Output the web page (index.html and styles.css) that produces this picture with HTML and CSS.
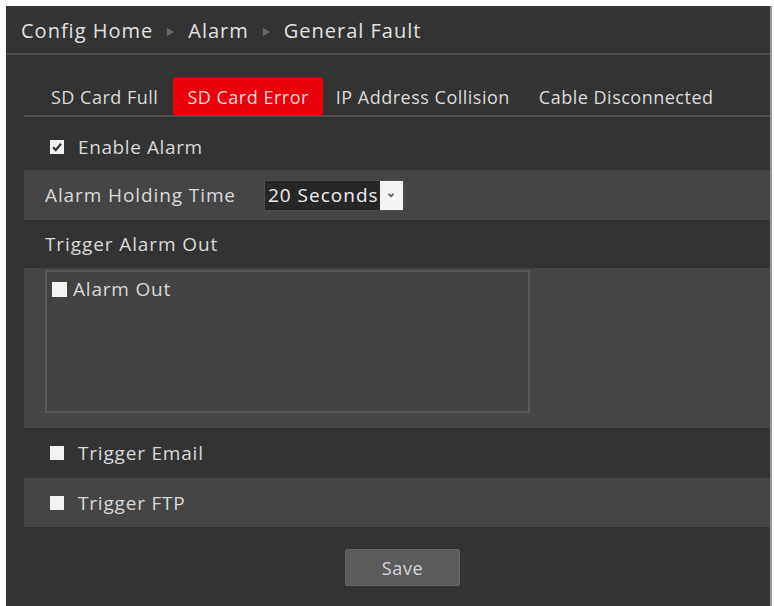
FILE: index.html
```html
<!DOCTYPE html>
<html>
<head>
<meta charset="utf-8">
<link rel="stylesheet" href="styles.css">
</head>
<body>
<div class="panel">
  <div class="crumb">
    <span>Config Home</span><span class="arrow"></span><span>Alarm</span><span class="arrow"></span><span>General Fault</span>
  </div>
  <div class="content">
    <div class="tabs">
      <div class="tab">SD Card Full</div>
      <div class="tab active">SD Card Error</div>
      <div class="tab">IP Address Collision</div>
      <div class="tab">Cable Disconnected</div>
    </div>
    <div class="row enable">
      <span class="cb checked"><svg viewBox="0 0 14 14" width="14" height="14"><path d="M3 7.2 L5.8 10 L11 3.8" fill="none" stroke="#333" stroke-width="2.2"/></svg></span>
      <span>Enable Alarm</span>
    </div>
    <div class="row light holding">
      <span class="label">Alarm Holding Time</span>
      <span class="select"><span class="val">20 Seconds</span><span class="drop"><svg viewBox="0 0 10 10" width="10" height="10"><path d="M2.5 3.8 L5 6.3 L7.5 3.8" fill="none" stroke="#555" stroke-width="1.6"/></svg></span></span>
    </div>
    <div class="row trig">
      <span class="label">Trigger Alarm Out</span>
    </div>
    <div class="boxarea light">
      <div class="box">
        <div class="boxitem"><span class="cb small"></span><span>Alarm Out</span></div>
      </div>
    </div>
    <div class="row email">
      <span class="cb"></span><span>Trigger Email</span>
    </div>
    <div class="row light ftp">
      <span class="cb"></span><span>Trigger FTP</span>
    </div>
    <div class="actions">
      <button class="save">Save</button>
    </div>
  </div>
</div>
</body>
</html>
```

FILE: styles.css
```css
html, body {
  margin: 0;
  padding: 0;
  background: #ffffff;
}
body {
  font-family: "Open Sans", "Liberation Sans", sans-serif;
  color: #d9d9d9;
}
.panel {
  margin: 6px 4px 0 6px;
  height: 600px;
  background: #333333;
  box-shadow: 2px 0 0 #9a9a9a;
}
.crumb {
  height: 45px;
  border-bottom: 2px solid #4c4c4c;
  padding-left: 15px;
  display: flex;
  align-items: center;
  font-size: 20px;
  letter-spacing: 1px;
  color: #e2e2e2;
  padding-top: 2px;
  box-sizing: content-box;
}
.arrow {
  display: inline-block;
  width: 0;
  height: 0;
  border-left: 7px solid #6a6a6a;
  border-top: 4.5px solid transparent;
  border-bottom: 4.5px solid transparent;
  margin: 2px 14px 0 14px;
}
.content {
  padding-left: 18px;
}
.tabs {
  margin-top: 23px;
  height: 37px;
  border-bottom: 2px solid #505050;
  display: flex;
  padding-left: 12px;
  font-size: 18px;
  letter-spacing: 0.5px;
}
.tab {
  padding: 0 15px;
  display: flex;
  align-items: center;
  color: #dcdcdc;
}
.tab.active {
  padding: 0 14px;
  background: #e8000b;
  color: #ffd9d9;
}
.tab:nth-child(3) {
  padding-left: 13px;
}
.tab:nth-child(4) {
  padding-left: 14px;
}
.row {
  display: flex;
  align-items: center;
  font-size: 19px;
  letter-spacing: 0.6px;
}
.light {
  background: #454545;
}
.enable {
  height: 53px;
  padding-left: 26px;
  padding-top: 6px;
  box-sizing: border-box;
}
.holding {
  height: 50px;
  padding-left: 21px;
  letter-spacing: 0.9px;
}
.trig {
  height: 48px;
  padding-left: 21px;
  letter-spacing: 0.9px;
}
.label {
  color: #dadada;
}
.cb {
  display: inline-block;
  width: 14px;
  height: 14px;
  background: #f2f2f2;
  margin-right: 14px;
  flex: none;
}
.cb svg {
  display: block;
}
.cb.small {
  width: 15px;
  height: 15px;
  margin-right: 6px;
}
.select {
  margin-left: 28px;
  display: flex;
  height: 31px;
  border: 1px solid #4e4e4e;
  background: #262626;
  box-sizing: border-box;
}
.val {
  padding: 0 1px 0 3px;
  font-size: 19px;
  letter-spacing: 1px;
  color: #eeeeee;
  display: flex;
  align-items: center;
}
.drop {
  width: 23px;
  background: #f4f4f4;
  display: flex;
  align-items: center;
  justify-content: center;
}
.boxarea {
  height: 160px;
  padding: 2px 0 0 21px;
  box-sizing: border-box;
}
.box {
  width: 485px;
  height: 143px;
  border: 2px solid #585858;
  box-sizing: border-box;
  background: #434343;
  padding: 4px 0 0 5px;
}
.boxitem {
  display: flex;
  align-items: center;
  font-size: 19px;
  letter-spacing: 0.8px;
}
.email {
  height: 50px;
  padding-left: 26px;
  letter-spacing: 0.8px;
}
.ftp {
  height: 49px;
  padding-left: 26px;
  letter-spacing: 0.8px;
}
.actions {
  padding-top: 22px;
  padding-left: 321px;
}
.save {
  width: 115px;
  height: 37px;
  background: #5b5b5b;
  border: 1px solid #666;
  border-radius: 2px;
  color: #d6d6d6;
  font-family: "Open Sans", "Liberation Sans", sans-serif;
  font-size: 18px;
  letter-spacing: 0.6px;
}
```
